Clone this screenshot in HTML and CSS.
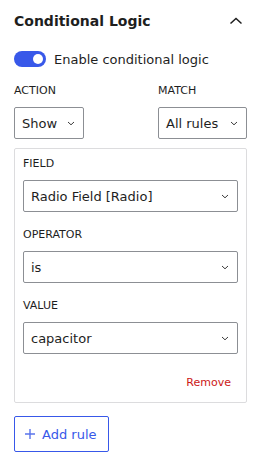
FILE: index.html
```html
<!DOCTYPE html>
<html>
<head>
<title>Conditional Logic</title>
<link rel="stylesheet" href="styles.css">
</head>
<body>
<div class="panel">
	<div class="panel-head">
		<h2>Conditional Logic</h2>
		<svg class="toggle-arrow" width="14" height="14" viewBox="0 0 14 14"><path d="M1.5 9.5 L7 4.5 L12.5 9.5" fill="none" stroke="#1e1e1e" stroke-width="1.5"/></svg>
	</div>

	<label class="switch-row">
		<span class="switch"><span class="knob"></span></span>
		Enable conditional logic
	</label>

	<div class="top-row">
		<div class="col">
			<div class="lbl">Action</div>
			<div class="sel sel-small">Show <svg class="chev" width="8" height="5" viewBox="0 0 8 5"><path d="M1 1 L4 3.8 L7 1" fill="none" stroke="#3c3c3c" stroke-width="1"/></svg></div>
		</div>
		<div class="col">
			<div class="lbl">Match</div>
			<div class="sel sel-match">All rules <svg class="chev" width="8" height="5" viewBox="0 0 8 5"><path d="M1 1 L4 3.8 L7 1" fill="none" stroke="#3c3c3c" stroke-width="1"/></svg></div>
		</div>
	</div>

	<div class="rule">
		<div class="field">
			<div class="lbl">Field</div>
			<div class="sel">Radio Field [Radio] <svg class="chev" width="8" height="5" viewBox="0 0 8 5"><path d="M1 1 L4 3.8 L7 1" fill="none" stroke="#3c3c3c" stroke-width="1"/></svg></div>
		</div>
		<div class="field">
			<div class="lbl">Operator</div>
			<div class="sel">is <svg class="chev" width="8" height="5" viewBox="0 0 8 5"><path d="M1 1 L4 3.8 L7 1" fill="none" stroke="#3c3c3c" stroke-width="1"/></svg></div>
		</div>
		<div class="field">
			<div class="lbl">Value</div>
			<div class="sel">capacitor <svg class="chev" width="8" height="5" viewBox="0 0 8 5"><path d="M1 1 L4 3.8 L7 1" fill="none" stroke="#3c3c3c" stroke-width="1"/></svg></div>
		</div>
		<div class="remove-row"><a class="remove">Remove</a></div>
	</div>

	<button class="add-rule"><svg width="10" height="10" viewBox="0 0 10 10"><path d="M5 0 V10 M0 5 H10" stroke="#5a74ec" stroke-width="1.4"/></svg>Add rule</button>
</div>
</body>
</html>
```

FILE: styles.css
```css
* {
	box-sizing: border-box;
}
body {
	margin: 0;
	background: #fff;
	font-family: "DejaVu Sans", sans-serif;
	color: #1e1e1e;
}
.panel {
	padding: 0 16px 0 14px;
}
.panel-head {
	height: 42px;
	display: flex;
	align-items: center;
	justify-content: space-between;
}
.panel-head h2 {
	margin: 0;
	font-size: 14px;
	font-weight: bold;
}
.toggle-arrow {
	margin-right: 4px;
}
.switch-row {
	display: flex;
	align-items: center;
	gap: 8px;
	font-size: 13px;
	margin-top: 9px;
	height: 16px;
}
.switch {
	width: 32px;
	height: 16px;
	border-radius: 8px;
	background: #3858e9;
	position: relative;
}
.knob {
	position: absolute;
	right: 3px;
	top: 3px;
	width: 10px;
	height: 10px;
	border-radius: 50%;
	background: #fff;
}
.lbl {
	font-size: 11px;
	line-height: 14px;
	text-transform: uppercase;
	margin-bottom: 9px;
}
.top-row {
	display: flex;
	justify-content: space-between;
	margin-top: 17px;
}
.sel {
	height: 32px;
	border: 1px solid #8c8f94;
	border-radius: 2px;
	display: flex;
	align-items: center;
	justify-content: space-between;
	padding: 0 8px 0 7px;
	font-size: 13px;
	background: #fff;
	white-space: nowrap;
}
.sel-small {
	width: 70px;
}
.sel-match {
	width: 89px;
}
.rule {
	margin-top: 9px;
	border: 1px solid #dcdcde;
	border-radius: 2px;
	padding: 8px 8px 12px;
}
.field + .field {
	margin-top: 16px;
}
.remove-row {
	display: flex;
	justify-content: flex-end;
	margin-top: 20px;
	height: 16px;
	align-items: center;
}
.remove {
	color: #cc1818;
	font-size: 11px;
	margin-right: 7px;
}
.add-rule {
	margin-top: 13px;
	height: 36px;
	width: 95px;
	border: 1px solid #3858e9;
	border-radius: 2px;
	background: #fff;
	color: #3858e9;
	font-family: "DejaVu Sans", sans-serif;
	font-size: 13px;
	display: flex;
	align-items: center;
	gap: 7px;
	padding: 0 0 0 10px;
	white-space: nowrap;
}
```
